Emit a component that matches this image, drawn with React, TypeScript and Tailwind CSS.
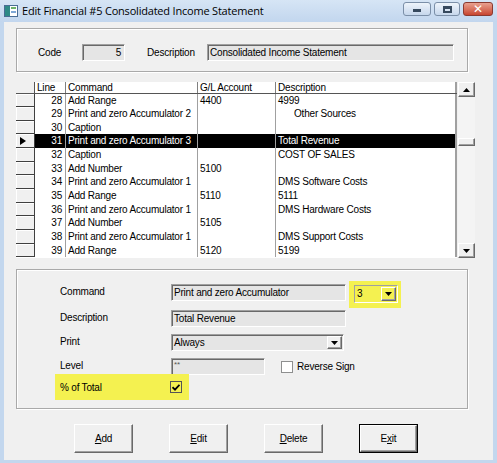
import React from 'react';

const ROWS = [
  { n: 28, cmd: 'Add Range', gl: '4400', desc: '4999' },
  { n: 29, cmd: 'Print and zero Accumulator 2', gl: '', desc: 'Other Sources', indent: true },
  { n: 30, cmd: 'Caption', gl: '', desc: '' },
  { n: 31, cmd: 'Print and zero Accumulator 3', gl: '', desc: 'Total Revenue', sel: true },
  { n: 32, cmd: 'Caption', gl: '', desc: 'COST OF SALES' },
  { n: 33, cmd: 'Add Number', gl: '5100', desc: '' },
  { n: 34, cmd: 'Print and zero Accumulator 1', gl: '', desc: 'DMS Software Costs' },
  { n: 35, cmd: 'Add Range', gl: '5110', desc: '5111' },
  { n: 36, cmd: 'Print and zero Accumulator 1', gl: '', desc: 'DMS Hardware Costs' },
  { n: 37, cmd: 'Add Number', gl: '5105', desc: '' },
  { n: 38, cmd: 'Print and zero Accumulator 1', gl: '', desc: 'DMS Support Costs' },
  { n: 39, cmd: 'Add Range', gl: '5120', desc: '5199' },
];

const sunken =
  'border border-t-[#a0a0a0] border-l-[#a0a0a0] border-b-white border-r-white shadow-[inset_1px_1px_0_#696969]';
const raised =
  'border border-t-white border-l-white border-b-[#696969] border-r-[#696969] shadow-[inset_-1px_-1px_0_#a0a0a0]';
const group =
  'border border-[#a9a9a9] shadow-[inset_1px_1px_0_#fff,1px_1px_0_#fff]';

function DownArrow() {
  return (
    <svg width="7" height="4" viewBox="0 0 7 4">
      <path d="M0 0h7L3.5 4z" fill="#000" />
    </svg>
  );
}

function UpArrow() {
  return (
    <svg width="7" height="4" viewBox="0 0 7 4">
      <path d="M0 4h7L3.5 0z" fill="#000" />
    </svg>
  );
}

function Btn({ children, def }: { children: React.ReactNode; def?: boolean }) {
  return (
    <div className={`w-[59px] h-[29px] ${def ? 'border border-black' : ''}`}>
      <div className={`w-full h-full bg-[#f0f0f0] flex items-center justify-center ${raised}`}>{children}</div>
    </div>
  );
}

export default function App() {
  return (
    <div className="w-[497px] h-[463px] bg-[#c3d7ee] flex flex-col font-['Liberation_Sans',Arial,sans-serif] text-[10px] tracking-[-0.2px] text-black overflow-hidden">
      {/* title bar */}
      <div className="h-[22px] flex items-start bg-gradient-to-b from-[#d6e5f5] to-[#c2d6ee]">
        <svg width="14" height="12" viewBox="0 0 14 12" className="mt-[5px] ml-[4px]">
          <rect x="0.5" y="0.5" width="13" height="11" fill="#fff" stroke="#4a6d94" />
          <rect x="1" y="1" width="5" height="10" fill="#2e8a86" />
          <rect x="7" y="2" width="5" height="2" fill="#6fb36a" />
          <rect x="7" y="6" width="5" height="2" fill="#7fa8d6" />
        </svg>
        <div className="ml-[4px] mt-[3px] font-['Open_Sans',sans-serif] text-[11px] tracking-[-0.2px] leading-[16px]">
          Edit Financial #5 Consolidated Income Statement
        </div>
        <div className="ml-auto mr-[4px] mt-[2px] flex gap-[3px]">
          <div className="w-[28px] h-[14px] rounded-[3px] border border-[#7b8fa8] bg-gradient-to-b from-[#eef4fb] to-[#c6d7ec] flex items-center justify-center">
            <div className="w-[8px] h-[3px] bg-[#36495e] mt-[3px]" />
          </div>
          <div className="w-[26px] h-[14px] rounded-[3px] border border-[#7b8fa8] bg-gradient-to-b from-[#eef4fb] to-[#c6d7ec] flex items-center justify-center">
            <div className="w-[9px] h-[7px] border-[2px] border-t-[3px] border-[#36495e]" />
          </div>
          <div className="w-[30px] h-[14px] rounded-[3px] border border-[#8b3a30] bg-gradient-to-b from-[#e8a08f] to-[#c7442f] flex items-center justify-center text-white font-bold text-[12px] leading-none font-['DejaVu_Sans',sans-serif]">
            ✕
          </div>
        </div>
      </div>

      {/* window body */}
      <div className="flex-1 ml-[4px] mr-[4px] mb-[3px] bg-[#f0f0f0] pl-[12px] pt-[6px] flex flex-col">
        {/* header group */}
        <div className={`w-[452px] h-[44px] ${group} flex items-start pt-[15px] pl-[21px]`}>
          <div className="w-[44px] leading-[17px]">Code</div>
          <div className={`w-[43px] h-[17px] bg-[#e5e5e5] ${sunken} text-right pr-[3px] leading-[15px]`}>5</div>
          <div className="w-[60px] ml-[22px] leading-[17px]">Description</div>
          <div className={`w-[247px] h-[17px] bg-[#e5e5e5] ${sunken} pl-[2px] leading-[15px]`}>
            Consolidated Income Statement
          </div>
        </div>

        {/* grid */}
        <div className="mt-[10px] flex h-[176px]">
          <div className="w-[441px] bg-white flex flex-col">
            <div className="flex h-[11.5px] leading-[11px] border-b border-[#555]">
              <div className="w-[19px] bg-[#f0f0f0] border-r border-[#555]" />
              <div className="w-[30px] pl-[2px]">Line</div>
              <div className="w-[132px] pl-[2px] border-l border-[#808080]">Command</div>
              <div className="w-[78px] pl-[2px] border-l border-[#808080]">G/L Account</div>
              <div className="w-[180px] pl-[2px] border-l border-[#808080]">Description</div>
              <div className="w-[2px] bg-[#a0a0a0]" />
            </div>
            {ROWS.map((r) => (
              <div
                key={r.n}
                className={`flex h-[13.67px] leading-[13px] ${r.sel ? 'bg-black text-white' : ''}`}
              >
                <div className="w-[19px] bg-[#f0f0f0] border-b border-r border-[#404040] shadow-[inset_1px_1px_0_#fff] flex items-center pl-[4px]">
                  {r.sel && (
                    <svg width="6" height="8" viewBox="0 0 6 8">
                      <path d="M0 0L6 4L0 8z" fill="#000" />
                    </svg>
                  )}
                </div>
                <div className="w-[30px] text-right pr-[3px]">{r.n}</div>
                <div className="w-[132px] pl-[2px] border-l border-[#a0a0a0] whitespace-nowrap">{r.cmd}</div>
                <div className="w-[78px] pl-[2px] border-l border-[#a0a0a0]">{r.gl}</div>
                <div className={`w-[180px] border-l border-[#a0a0a0] whitespace-nowrap ${r.indent ? 'pl-[18px]' : 'pl-[2px]'}`}>
                  {r.desc}
                </div>
                <div className="w-[2px] bg-[#a0a0a0]" />
              </div>
            ))}
          </div>
          <div className="w-[1px]" />
          <div className="w-[17px] bg-[#f4f4f4] flex flex-col">
            <div className={`h-[15px] bg-[#f0f0f0] ${raised} flex items-center justify-center`}>
              <UpArrow />
            </div>
            <div className="h-[41px]" />
            <div className={`h-[8px] bg-[#f0f0f0] ${raised}`} />
            <div className="flex-1" />
            <div className={`h-[15px] bg-[#f0f0f0] ${raised} flex items-center justify-center`}>
              <DownArrow />
            </div>
          </div>
        </div>

        {/* detail group */}
        <div className={`mt-[11px] w-[452px] h-[140px] ${group} flex flex-col pt-[14px] pl-[38px]`}>
          <div className="flex items-start h-[17px]">
            <div className="w-[116px] pl-[5px] leading-[15px]">Command</div>
            <div className={`w-[175px] h-[17px] bg-[#e5e5e5] ${sunken} pl-[2px] leading-[15px]`}>
              Print and zero Accumulator
            </div>
            <div className="ml-[3px] -mt-[3px] w-[52px] h-[27px] bg-[#f4f150] pt-[4px] pl-[5px]">
              <div className={`w-[44px] h-[18px] ${sunken} shadow-none flex items-center`}>
                <div className="flex-1 pl-[2px] leading-[14px]">3</div>
                <div className={`w-[15px] h-[14px] mr-[1px] ${raised} flex items-center justify-center`}>
                  <DownArrow />
                </div>
              </div>
            </div>
          </div>
          <div className="flex items-start h-[17px] mt-[9px]">
            <div className="w-[116px] pl-[5px] leading-[15px]">Description</div>
            <div className={`w-[175px] h-[17px] bg-[#e5e5e5] ${sunken} pl-[2px] leading-[15px]`}>Total Revenue</div>
          </div>
          <div className="flex items-start h-[17px] mt-[7px]">
            <div className="w-[116px] pl-[5px] leading-[15px]">Print</div>
            <div className={`w-[173px] h-[17px] bg-[#e5e5e5] ${sunken} flex items-center`}>
              <div className="flex-1 pl-[2px] leading-[15px]">Always</div>
              <div className={`w-[15px] h-[13px] mr-[1px] bg-[#f0f0f0] ${raised} flex items-center justify-center`}>
                <DownArrow />
              </div>
            </div>
          </div>
          <div className="flex items-start h-[17px] mt-[7px]">
            <div className="w-[116px] pl-[5px] leading-[15px]">Level</div>
            <div className={`w-[94px] h-[17px] bg-[#e5e5e5] ${sunken} pl-[2px] text-[8px] leading-[11px] text-[#555]`}>**</div>
            <div className="ml-[16px] mt-[3px] w-[12px] h-[12px] bg-white border border-[#8e8f8f]" />
            <div className="ml-[4px] leading-[17px]">Reverse Sign</div>
          </div>
          <div className="flex items-center -mt-[1px] w-[134px] h-[26px] bg-[#f4f150] pl-[5px]">
            <div className="w-[110px]">% of Total</div>
            <div className="w-[12px] h-[12px] border border-[#555] flex items-center justify-center">
              <svg width="8" height="7" viewBox="0 0 8 7">
                <path d="M0.5 3.2L3 5.7L7.5 0.8" stroke="#000" strokeWidth="1.8" fill="none" />
              </svg>
            </div>
          </div>
        </div>

        {/* buttons */}
        <div className="mt-[15px] flex pl-[58px] gap-[36px]">
          <Btn><span><u>A</u>dd</span></Btn>
          <Btn><span><u>E</u>dit</span></Btn>
          <Btn><span><u>D</u>elete</span></Btn>
          <Btn def><span>E<u>x</u>it</span></Btn>
        </div>
      </div>
    </div>
  );
}
